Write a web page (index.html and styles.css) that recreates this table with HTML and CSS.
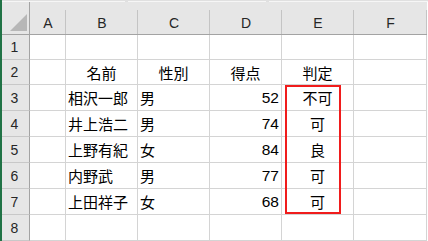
FILE: index.html
```html
<!DOCTYPE html>
<html lang="ja">
<head>
<meta charset="utf-8">
<link rel="stylesheet" href="styles.css">
</head>
<body>
<div class="app">
  <div class="topstrip">
    <span class="seg seg1"></span><span class="gap"></span><span class="seg seg2"></span><span class="gap"></span><span class="seg seg3"></span>
  </div>
  <div class="sheet">
    <div class="corner"><svg width="18" height="18" viewBox="0 0 18 18"><polygon points="0,17 17,0 17,17" fill="#b7b7b7"/></svg></div>
    <div class="ch">A</div><div class="ch">B</div><div class="ch">C</div><div class="ch">D</div><div class="ch">E</div><div class="ch">F</div>

    <div class="rh">1</div><div class="c"></div><div class="c"></div><div class="c"></div><div class="c"></div><div class="c"></div><div class="c"></div>

    <div class="rh">2</div><div class="c"></div><div class="c ctr">名前</div><div class="c ctr">性別</div><div class="c ctr">得点</div><div class="c ctr">判定</div><div class="c"></div>

    <div class="rh">3</div><div class="c"></div><div class="c">相沢一郎</div><div class="c">男</div><div class="c num">52</div><div class="c ctr">不可</div><div class="c"></div>

    <div class="rh">4</div><div class="c"></div><div class="c">井上浩二</div><div class="c">男</div><div class="c num">74</div><div class="c ctr">可</div><div class="c"></div>

    <div class="rh">5</div><div class="c"></div><div class="c">上野有紀</div><div class="c">女</div><div class="c num">84</div><div class="c ctr">良</div><div class="c"></div>

    <div class="rh">6</div><div class="c"></div><div class="c">内野武</div><div class="c">男</div><div class="c num">77</div><div class="c ctr">可</div><div class="c"></div>

    <div class="rh">7</div><div class="c"></div><div class="c">上田祥子</div><div class="c">女</div><div class="c num">68</div><div class="c ctr">可</div><div class="c"></div>

    <div class="rh">8</div><div class="c"></div><div class="c"></div><div class="c"></div><div class="c"></div><div class="c"></div><div class="c"></div>

    <div class="highlight"></div>
  </div>
</div>
</body>
</html>
```
FILE: styles.css
```css
html, body {
  margin: 0;
  padding: 0;
}
body {
  width: 428px;
  height: 241px;
  overflow: hidden;
  background: #ffffff;
  font-family: "Liberation Sans", "Noto Sans CJK JP", sans-serif;
}
.app {
  box-sizing: border-box;
  height: 241px;
  border-left: 2px solid #217346;
  display: flex;
  flex-direction: column;
}
.topstrip {
  height: 3px;
  box-sizing: border-box;
  padding-top: 1px;
  background: #e0e0e0;
  display: flex;
}
.seg {
  height: 1px;
  background: #f6f6f6;
}
.seg1 { width: 123px; }
.seg2 { width: 138px; }
.seg3 { flex: 1; }
.gap { width: 3px; }

.sheet {
  position: relative;
  display: grid;
  grid-template-columns: 28px 36px 72px 72px 72px 72px 73px 1px;
  grid-template-rows: 33px 25px 25px 26px 26px 26px 26px 26px 26px;
  background: #ffffff;
}
.corner, .ch, .rh, .c {
  box-sizing: border-box;
}
.corner {
  grid-column: 1;
  background: #e6e6e6;
  border-right: 1px solid #a3a3a3;
  border-bottom: 1px solid #a3a3a3;
  display: flex;
  align-items: flex-end;
  justify-content: flex-end;
  padding: 0 1px 2px 0;
}
.corner svg {
  display: block;
}
.ch {
  background: linear-gradient(#c4c4c4, #c4c4c4) right 0 bottom 0 / 1px 24px no-repeat, #e6e6e6;
  border-bottom: 1px solid #a3a3a3;
  display: flex;
  align-items: center;
  justify-content: center;
  padding-top: 9px;
  font-size: 14px;
  color: #262626;
}
.rh {
  grid-column: 1;
  background: #e6e6e6;
  border-right: 1px solid #a3a3a3;
  border-bottom: 1px solid #c8c8c8;
  display: flex;
  align-items: center;
  justify-content: center;
  padding-right: 2px;
  font-size: 14px;
  color: #262626;
}
.c {
  border-right: 1px solid #d4d4d4;
  border-bottom: 1px solid #d4d4d4;
  display: flex;
  align-items: center;
  padding: 0 2px 0 2px;
  font-size: 15px;
  color: #000000;
  white-space: nowrap;
}
.c.ctr {
  justify-content: center;
}
.c.num {
  justify-content: flex-end;
  font-size: 15.5px;
}
.highlight {
  position: absolute;
  grid-column: 6;
  grid-row: 4 / 9;
  top: 0;
  left: 3px;
  box-sizing: border-box;
  width: 56px;
  height: 129px;
  border: 2px solid #f01c1c;
}
```
